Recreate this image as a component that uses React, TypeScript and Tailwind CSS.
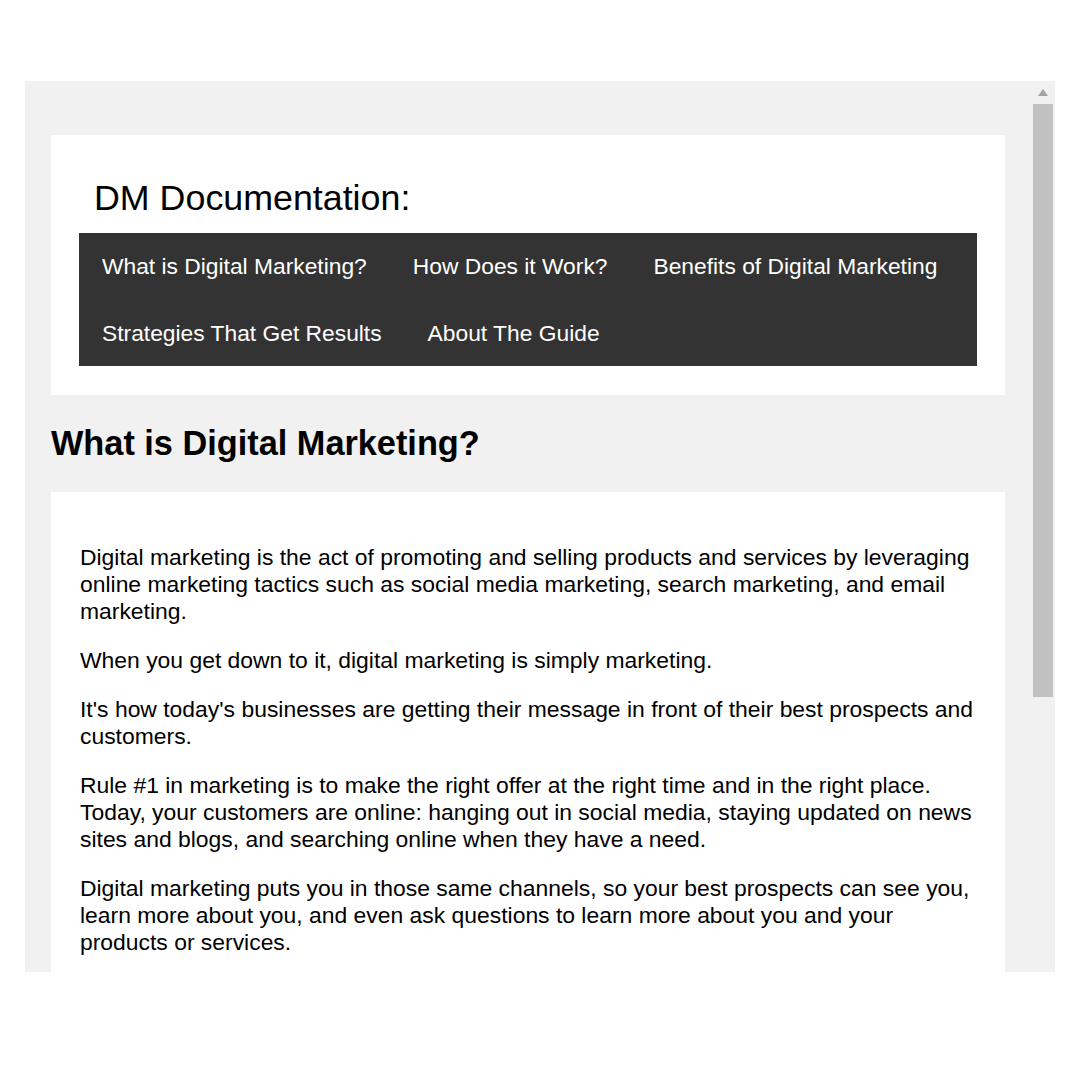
const navItems = [
  "What is Digital Marketing?",
  "How Does it Work?",
  "Benefits of Digital Marketing",
  "Strategies That Get Results",
  "About The Guide",
]

const paragraphs = [
  "Digital marketing is the act of promoting and selling products and services by leveraging online marketing tactics such as social media marketing, search marketing, and email marketing.",
  "When you get down to it, digital marketing is simply marketing.",
  "It's how today's businesses are getting their message in front of their best prospects and customers.",
  "Rule #1 in marketing is to make the right offer at the right time and in the right place. Today, your customers are online: hanging out in social media, staying updated on news sites and blogs, and searching online when they have a need.",
  "Digital marketing puts you in those same channels, so your best prospects can see you, learn more about you, and even ask questions to learn more about you and your products or services.",
]

export default function App() {
  return (
    <div className="w-[1080px] h-[1080px] bg-white pt-[81px] pl-[25px] font-['Liberation_Sans',Arial,sans-serif] text-black">
      <div className="w-[1030px] h-[891px] bg-[#f1f1f1] flex overflow-hidden">
        <div className="w-[1008px] h-full overflow-hidden pl-[26px] pr-[28px] pt-[54px]">
          <header className="bg-white p-[28px] pb-[29px]">
            <h1 className="h-[70px] flex items-center pl-[15px] text-[35.8px] leading-[41px]">DM Documentation:</h1>
            <nav className="bg-[#333333] flex flex-wrap">
              {navItems.map(item => (
                <a key={item} href="#" className="px-[23px] py-[20px] text-[22.8px] leading-[26.5px] text-white">
                  {item}
                </a>
              ))}
            </nav>
          </header>
          <h2 className="py-[29px] text-[34.3px] leading-[39px] font-bold">What is Digital Marketing?</h2>
          <section className="bg-white px-[29px] pt-[52px] pb-[40px]">
            {paragraphs.map((p, i) => (
              <p key={i} className="text-[22.9px] leading-[27px] mb-[22px]">{p}</p>
            ))}
          </section>
        </div>
        <div className="w-[22px] h-full flex flex-col items-start">
          <div className="w-[20px] h-[23px] flex items-center justify-center">
            <svg width="10" height="7" viewBox="0 0 10 7"><path d="M5 0 L10 7 L0 7 Z" fill="#a3a3a3" /></svg>
          </div>
          <div className="w-[20px] h-[593px] bg-[#c1c1c1]" />
        </div>
      </div>
    </div>
  )
}
